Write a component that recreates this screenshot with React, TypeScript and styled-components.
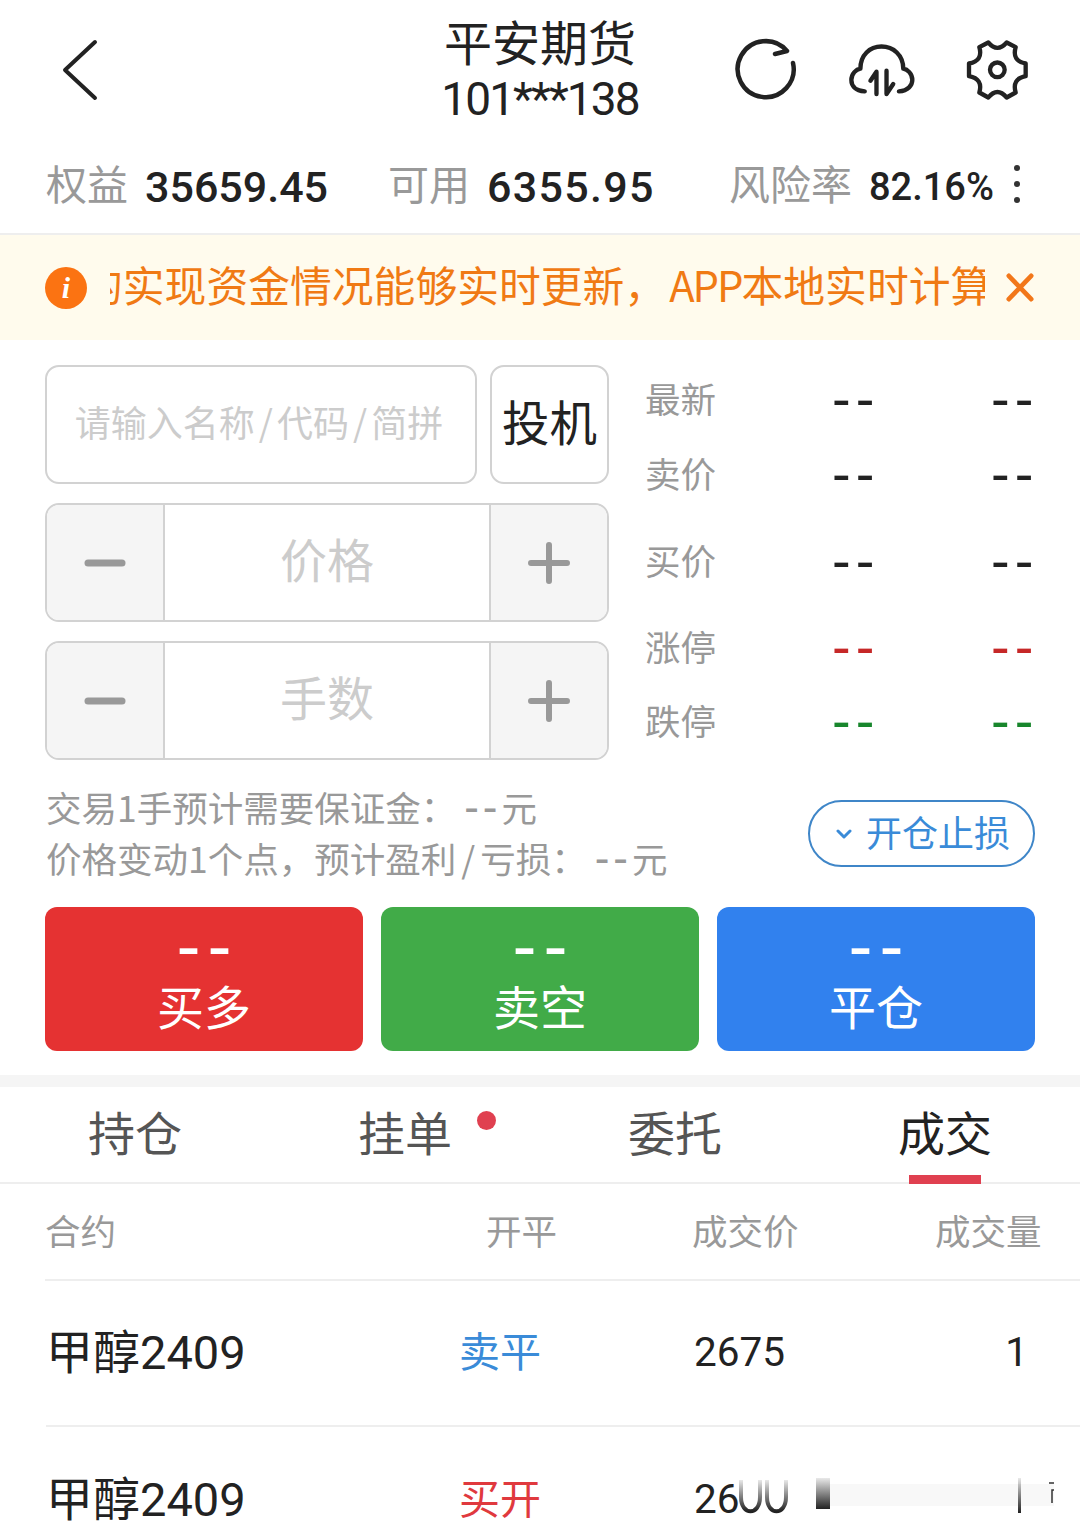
import React from 'react';
import styled, {createGlobalStyle} from 'styled-components';

const cjk = '"Noto Sans CJK SC", sans-serif';
const num = 'Roboto, "Noto Sans CJK SC", sans-serif';

const GlobalStyle = createGlobalStyle`
  html, body {
    margin: 0;
    padding: 0;
    background: #fff;
  }
  * {
    box-sizing: border-box;
  }
`

const Page = styled.div`
  width: 1080px;
  height: 1531px;
  overflow: hidden;
  background: #fff;
  font-family: ${cjk};
  color: #222;
`

const Header = styled.header`
  display: grid;
  grid-template-columns: 1fr 200px 1fr;
  align-items: center;
  height: 140px;
  padding: 0 50px;
`

const BackWrap = styled.div`
  padding-left: 12px;
`

const TitleBlock = styled.div`
  display: flex;
  flex-direction: column;
  align-items: center;
  justify-self: center;
  white-space: nowrap;
`

const Title = styled.div`
  font-size: 48px;
  line-height: 52px;
  color: #222;
`

const Account = styled.div`
  margin-top: 6px;
  font-family: ${num};
  font-size: 46px;
  line-height: 54px;
  font-weight: 400;
  letter-spacing: -1.9px;
  color: #222;
`

const HeaderIcons = styled.div`
  display: flex;
  align-items: center;
  justify-content: flex-end;
  gap: 50px;
`

const Stats = styled.div`
  display: flex;
  align-items: center;
  height: 95px;
  padding: 0 0 10px 46px;
  border-bottom: 2px solid #eee;
`

const Stat = styled.div<{ $width: number }>`
  display: flex;
  align-items: center;
  gap: 17px;
  width: ${p => p.$width}px;
  white-space: nowrap;
`

const StatLabel = styled.span`
  font-size: 41px;
  line-height: 56px;
  color: #999;
`

const StatValue = styled.span<{ $small?: boolean; $wide?: boolean }>`
  margin-top: 10px;
  font-family: ${num};
  font-size: ${p => p.$small ? 38 : 43}px;
  font-weight: 500;
  letter-spacing: ${p => p.$wide ? 1.3 : 0}px;
  color: #222;
`

const Dots = styled.div`
  display: flex;
  flex-direction: column;
  gap: 10px;
  margin-left: 3px;
  margin-top: 4px;

  i {
    width: 6px;
    height: 6px;
    border-radius: 50%;
    background: #333;
  }
`

const Banner = styled.div`
  display: flex;
  align-items: center;
  height: 105px;
  padding: 0 46px 0 45px;
  background: #fffbed;
`

const InfoDot = styled.div`
  flex: none;
  width: 42px;
  height: 42px;
  border-radius: 50%;
  background: #fb7312;
  color: #fff;
  font-family: "Liberation Serif", serif;
  font-style: italic;
  font-weight: 700;
  font-size: 30px;
  line-height: 42px;
  text-align: center;
`

const Marquee = styled.div`
  flex: none;
  width: 875px;
  margin: 0 21px 8px 23px;
  overflow: hidden;
  white-space: nowrap;
`

const MarqueeText = styled.div`
  margin-left: -29px;
  font-size: 41.8px;
  line-height: 60px;
  color: #f07a14;

  span {
    margin-left: 3px;
    letter-spacing: -2px;
  }
`

const Form = styled.div`
  display: grid;
  grid-template-columns: 564px 388px;
  column-gap: 36px;
  padding: 25px 0 0 45px;
`

const FormLeft = styled.div`
  display: flex;
  flex-direction: column;
  gap: 19px;
`

const FormRow = styled.div`
  display: flex;
  gap: 13px;
  height: 119px;
`

const SearchBox = styled.div`
  flex: 1;
  display: flex;
  align-items: center;
  justify-content: center;
  border: 2px solid #d2d2d2;
  border-radius: 14px;
  font-size: 36px;
  color: #ccc;
  white-space: nowrap;
  padding: 0 4px 8px 0;

  em {
    font-style: normal;
    margin: 0 4px;
  }
`

const TypeButton = styled.div`
  flex: none;
  width: 119px;
  display: flex;
  align-items: center;
  justify-content: center;
  border: 2px solid #d2d2d2;
  border-radius: 14px;
  font-size: 47.5px;
  color: #222;
  padding-bottom: 8px;
`

const Stepper = styled.div`
  display: flex;
  height: 119px;
  border: 2px solid #d2d2d2;
  border-radius: 14px;
  overflow: hidden;
`

const StepButton = styled.div`
  flex: none;
  width: 116px;
  display: flex;
  align-items: center;
  justify-content: center;
  background: #f5f5f5;
`

const StepInput = styled.div`
  flex: 1;
  display: flex;
  align-items: center;
  justify-content: center;
  border-left: 2px solid #d2d2d2;
  border-right: 2px solid #d2d2d2;
  font-size: 47px;
  color: #ccc;
  padding-bottom: 11px;
`

const Quotes = styled.div`
  display: grid;
  grid-template-rows: 72px 78px 96px 76px 72px;
`

const QuoteRow = styled.div`
  display: grid;
  grid-template-columns: 187px 159px 42px;
  align-items: center;
`

const QuoteLabel = styled.span`
  font-size: 35.5px;
  line-height: 50px;
  color: #999;
  padding-bottom: 6px;
`

const Dash = styled.span<{ $color?: string }>`
  font-family: "Liberation Sans", sans-serif;
  font-size: 56px;
  line-height: 40px;
  letter-spacing: 5px;
  color: ${p => p.$color || '#222'};
  white-space: nowrap;
  padding-bottom: 4px;
`

const Hints = styled.div`
  display: flex;
  align-items: center;
  justify-content: space-between;
  height: 147px;
  padding: 25px 45px 29px 46px;
`

const HintText = styled.div`
  font-size: 35.5px;
  line-height: 51px;
  color: #999;
  white-space: nowrap;

  em {
    font-style: normal;
    margin: 0 5px;
  }
`

const HintDash = styled.span`
  font-family: "Liberation Sans", sans-serif;
  font-size: 44px;
  line-height: 30px;
  letter-spacing: 4px;
  margin-left: 8px;
`

const StopButton = styled.div`
  display: flex;
  align-items: center;
  gap: 14px;
  width: 227px;
  height: 67px;
  margin-top: 4px;
  padding: 0 0 6px 26px;
  border: 2px solid #3f86c8;
  border-radius: 34px;
  font-size: 36px;
  color: #3a8bd8;
  white-space: nowrap;

  svg {
    margin-top: 6px;
  }
`

const Actions = styled.div`
  display: grid;
  grid-template-columns: repeat(3, 318px);
  column-gap: 18px;
  padding: 0 45px;
`

const ActionButton = styled.div<{ $bg: string }>`
  display: flex;
  flex-direction: column;
  align-items: center;
  height: 144px;
  padding-top: 18px;
  border-radius: 12px;
  background: ${p => p.$bg};
  color: #fff;
`

const ActionPrice = styled.span`
  padding-left: 7px;
  font-family: "Liberation Sans", sans-serif;
  font-size: 72px;
  line-height: 40px;
  letter-spacing: 7px;
`

const ActionLabel = styled.span`
  font-size: 47px;
  line-height: 70px;
  margin-top: 5px;
`

const Band = styled.div`
  height: 12px;
  margin-top: 24px;
  background: #f5f5f5;
`

const Tabs = styled.div`
  display: grid;
  grid-template-columns: repeat(4, 270px);
  height: 97px;
  border-bottom: 2px solid #eee;
`

const Tab = styled.div<{ $active?: boolean }>`
  position: relative;
  display: flex;
  justify-content: center;
  padding-top: 10px;
  font-size: 47px;
  line-height: 68px;
  color: ${p => p.$active ? '#222' : '#555'};
`

const TabDot = styled.i`
  position: absolute;
  top: 24px;
  left: 207px;
  width: 19px;
  height: 19px;
  border-radius: 50%;
  background: #e04050;
`

const TabBar = styled.i`
  position: absolute;
  bottom: -2px;
  left: 99px;
  width: 72px;
  height: 9px;
  background: #e04050;
`

const TableHead = styled.div`
  display: grid;
  grid-template-columns: 441px 206px 243px auto;
  align-items: center;
  height: 97px;
  margin-left: 45px;
  border-bottom: 2px solid #eee;
  font-size: 35.5px;
  color: #999;
  white-space: nowrap;
  padding-bottom: 4px;
`

const TradeRow = styled.div`
  position: relative;
  display: grid;
  grid-template-columns: 413px 235px 1fr auto;
  align-items: center;
  height: 146px;
  margin-left: 46px;
  padding-right: 52px;
  border-bottom: 2px solid #eee;
  font-size: 46px;
  white-space: nowrap;

  &:last-child {
    border-bottom: none;
  }
`

const TradeName = styled.span`
  margin-bottom: 9px;
  font-family: ${num};
  font-size: 47px;
  font-weight: 400;
  color: #222;
`

const TradeSide = styled.span<{ $color: string }>`
  margin-bottom: 8px;
  font-size: 41px;
  color: ${p => p.$color};
`

const TradeNum = styled.span`
  margin-bottom: 2px;
  font-family: ${num};
  font-size: 40.5px;
  color: #222;
`

const Smear = styled.svg`
  position: absolute;
  left: 690px;
  top: 50px;
`

const Icon = styled.svg`
  display: block;
  fill: none;
  stroke-linecap: round;
  stroke-linejoin: round;
`

const BackIcon = () => (
  <Icon width={36} height={62} viewBox="0 0 36 62" stroke="#222" strokeWidth={4}>
    <path d="M33 3 L3 31 L33 59"/>
  </Icon>
);

const RefreshIcon = () => (
  <Icon width={64} height={64} viewBox="0 0 64 64" stroke="#222" strokeWidth={4.5}>
    <path d="M59 25 A28 28 0 1 1 53 13 L41 16"/>
  </Icon>
);

const CloudIcon = () => (
  <Icon width={67} height={54} viewBox="445 70 200 160" stroke="#222" strokeWidth={13}>
    <path d="M495 214 C465 212 455 195 455 180 C455 160 470 148 482 146 C482 105 510 80 545 80 C580 80 610 105 610 146 C622 148 637 160 637 180 C637 195 625 212 597 214"/>
    <path d="M530 222 L530 155 L512 182"/>
    <path d="M560 152 L560 222 L580 192"/>
  </Icon>
);

const GearIcon = () => (
  <Icon width={65} height={62} viewBox="800 60 195 185" stroke="#222" strokeWidth={13}>
    <path d="M870 70 Q897 102 925 70 L952 84 Q940 125 982 133 L982 171 Q940 179 952 220 L925 235 Q897 202 870 235 L843 220 Q855 179 812 171 L812 133 Q855 125 843 84 Z"/>
    <circle cx={897} cy={152} r={22}/>
  </Icon>
);

const CloseIcon = () => (
  <Icon width={30} height={31} viewBox="0 0 30 31" stroke="#f2771a" strokeWidth={5}>
    <path d="M3 3 L27 28 M27 3 L3 28"/>
  </Icon>
);

const MinusIcon = () => (
  <Icon width={42} height={8} viewBox="0 0 42 8" stroke="#999" strokeWidth={7}>
    <path d="M4 4 H38"/>
  </Icon>
);

const PlusIcon = () => (
  <Icon width={42} height={42} viewBox="0 0 42 42" stroke="#999" strokeWidth={6}>
    <path d="M3 21 H39 M21 3 V39"/>
  </Icon>
);

const ChevronIcon = () => (
  <Icon width={16} height={10} viewBox="0 0 16 10" stroke="#3a8bd8" strokeWidth={3}>
    <path d="M2 2 L8 8 L14 2"/>
  </Icon>
);

const SmearMark = () => (
  <Smear width={330} height={40} viewBox="0 0 330 40">
    <defs>
      <linearGradient id="fade" x1="0" y1="0" x2="0" y2="1">
        <stop offset="0" stopColor="#222" stopOpacity={0.1}/>
        <stop offset="1" stopColor="#222" stopOpacity={1}/>
      </linearGradient>
    </defs>
    <rect x={94} y={7} width={224} height={22} fill="#f8f8f8"/>
    <path d="M5 3 V20 C5 39 24 39 24 20 V3" fill="none" stroke="url(#fade)" strokeWidth={4}/>
    <path d="M31 3 V20 C31 39 50 39 50 20 V3" fill="none" stroke="url(#fade)" strokeWidth={4}/>
    <rect x={80} y={1} width={14} height={31} fill="url(#fade)"/>
    <rect x={282} y={1} width={3} height={35} fill="url(#fade)"/>
    <path d="M318 13 H316 V26 M313 6 H318" fill="none" stroke="#333" strokeWidth={1.5}/>
  </Smear>
);

const quotes = [
    {label: '最新'},
    {label: '卖价'},
    {label: '买价'},
    {label: '涨停', color: '#c62828'},
    {label: '跌停', color: '#18862c'},
];

const actions = [
    {label: '买多', bg: '#e53232'},
    {label: '卖空', bg: '#41ab48'},
    {label: '平仓', bg: '#3181ee'},
];

const StepField = (props: { placeholder: string }) => (
    <Stepper>
        <StepButton><MinusIcon/></StepButton>
        <StepInput>{props.placeholder}</StepInput>
        <StepButton><PlusIcon/></StepButton>
    </Stepper>
);

const App = () => {
    return (
        <Page>
            <GlobalStyle/>
            <Header>
                <BackWrap><BackIcon/></BackWrap>
                <TitleBlock>
                    <Title>平安期货</Title>
                    <Account>101***138</Account>
                </TitleBlock>
                <HeaderIcons>
                    <RefreshIcon/>
                    <CloudIcon/>
                    <GearIcon/>
                </HeaderIcons>
            </Header>

            <Stats>
                <Stat $width={342}><StatLabel>权益</StatLabel><StatValue>35659.45</StatValue></Stat>
                <Stat $width={341}><StatLabel>可用</StatLabel><StatValue $wide>6355.95</StatValue></Stat>
                <Stat $width={288}>
                    <StatLabel>风险率</StatLabel>
                    <StatValue $small>82.16%</StatValue>
                    <Dots><i/><i/><i/></Dots>
                </Stat>
            </Stats>

            <Banner>
                <InfoDot>i</InfoDot>
                <Marquee>
                    <MarqueeText>的实现资金情况能够实时更新，<span>APP</span>本地实时计算</MarqueeText>
                </Marquee>
                <CloseIcon/>
            </Banner>

            <Form>
                <FormLeft>
                    <FormRow>
                        <SearchBox>请输入名称<em>/</em>代码<em>/</em>简拼</SearchBox>
                        <TypeButton>投机</TypeButton>
                    </FormRow>
                    <StepField placeholder="价格"/>
                    <StepField placeholder="手数"/>
                </FormLeft>
                <Quotes>
                    {quotes.map(q => (
                        <QuoteRow key={q.label}>
                            <QuoteLabel>{q.label}</QuoteLabel>
                            <Dash $color={q.color}>--</Dash>
                            <Dash $color={q.color}>--</Dash>
                        </QuoteRow>
                    ))}
                </Quotes>
            </Form>

            <Hints>
                <HintText>
                    交易1手预计需要保证金：<HintDash>--</HintDash>元<br/>
                    价格变动1个点，预计盈利<em>/</em>亏损：<HintDash>--</HintDash>元
                </HintText>
                <StopButton><ChevronIcon/>开仓止损</StopButton>
            </Hints>

            <Actions>
                {actions.map(a => (
                    <ActionButton key={a.label} $bg={a.bg}>
                        <ActionPrice>--</ActionPrice>
                        <ActionLabel>{a.label}</ActionLabel>
                    </ActionButton>
                ))}
            </Actions>

            <Band/>

            <Tabs>
                <Tab>持仓</Tab>
                <Tab>挂单<TabDot/></Tab>
                <Tab>委托</Tab>
                <Tab $active>成交<TabBar/></Tab>
            </Tabs>

            <TableHead>
                <span>合约</span>
                <span>开平</span>
                <span>成交价</span>
                <span>成交量</span>
            </TableHead>

            <TradeRow>
                <TradeName>甲醇2409</TradeName>
                <TradeSide $color="#3a8bd8">卖平</TradeSide>
                <TradeNum>2675</TradeNum>
                <TradeNum>1</TradeNum>
            </TradeRow>
            <TradeRow>
                <TradeName>甲醇2409</TradeName>
                <TradeSide $color="#e0393e">买开</TradeSide>
                <TradeNum>26</TradeNum>
                <SmearMark/>
            </TradeRow>
        </Page>
    );
}

export default App;
